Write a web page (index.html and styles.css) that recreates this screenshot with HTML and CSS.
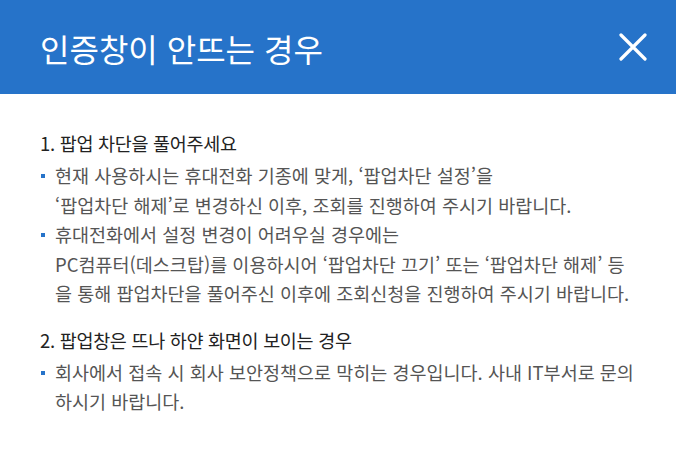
FILE: index.html
```html
<!DOCTYPE html>
<html lang="ko">
<head>
<meta charset="utf-8">
<link rel="stylesheet" href="styles.css">
</head>
<body>
<div class="modal">
  <header class="head">
    <h1 class="title">인증창이 안뜨는 경우</h1>
    <button class="close" aria-label="닫기">
      <svg width="28" height="28" viewBox="0 0 28 28"><path d="M2 2L26 26M26 2L2 26" stroke="#fff" stroke-width="3.2" stroke-linecap="round" fill="none"/></svg>
    </button>
  </header>
  <div class="body">
    <section class="sec">
      <h2 class="sec-title">1. 팝업 차단을 풀어주세요</h2>
      <ul class="list">
        <li>현재 사용하시는 휴대전화 기종에 맞게, ‘팝업차단 설정’을<br>‘팝업차단 해제’로 변경하신 이후, 조회를 진행하여 주시기 바랍니다.</li>
        <li>휴대전화에서 설정 변경이 어려우실 경우에는<br>PC컴퓨터(데스크탑)를 이용하시어 ‘팝업차단 끄기’ 또는 ‘팝업차단 해제’ 등<br>을 통해 팝업차단을 풀어주신 이후에 조회신청을 진행하여 주시기 바랍니다.</li>
      </ul>
    </section>
    <section class="sec sec2">
      <h2 class="sec-title">2. 팝업창은 뜨나 하얀 화면이 보이는 경우</h2>
      <ul class="list">
        <li>회사에서 접속 시 회사 보안정책으로 막히는 경우입니다. 사내 IT부서로 문의<br>하시기 바랍니다.</li>
      </ul>
    </section>
  </div>
</div>
</body>
</html>
```

FILE: styles.css
```css
html, body {
  margin: 0;
  padding: 0;
  background: #fff;
}
body {
  font-family: "Noto Sans CJK KR", "Noto Sans", sans-serif;
  width: 676px;
  height: 455px;
  overflow: hidden;
}
.head {
  height: 94px;
  background: #2673c9;
  display: flex;
  align-items: center;
  justify-content: space-between;
  padding: 0 28px 0 40px;
  box-sizing: border-box;
}
.title {
  margin: 0;
  color: #fff;
  font-size: 32px;
  font-weight: 400;
  letter-spacing: 0;
  line-height: 1;
  padding-top: 2px;
}
.close {
  background: none;
  border: 0;
  padding: 0;
  margin: 0;
  width: 30px;
  height: 30px;
  display: flex;
  align-items: center;
  justify-content: center;
}
.body {
  padding: 34px 20px 0 40px;
}
.sec-title {
  margin: 0;
  font-size: 18.5px;
  font-weight: 400;
  color: #222;
  line-height: 30px;
  letter-spacing: -0.3px;
}
.list {
  list-style: none;
  margin: 3px 0 0;
  padding: 0;
}
.list li {
  position: relative;
  padding-left: 15px;
  font-size: 18.5px;
  line-height: 29.5px;
  color: #555;
  letter-spacing: 0;
  white-space: nowrap;
}
.list li::before {
  content: "";
  position: absolute;
  left: 1px;
  top: 13px;
  width: 4px;
  height: 4px;
  background: #2673c9;
}
.sec2 {
  margin-top: 16px;
}
```
